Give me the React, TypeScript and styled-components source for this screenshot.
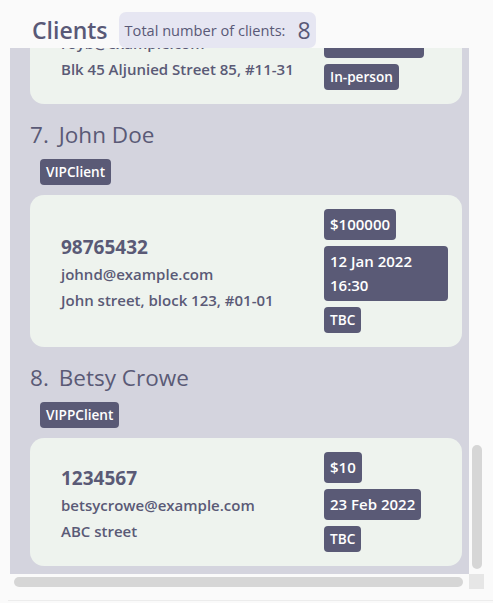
import React from "react";
import styled, { createGlobalStyle } from "styled-components";

const GlobalStyle = createGlobalStyle`
  html, body {
    margin: 0;
    padding: 0;
    background: #fafafa;
    font-family: "Open Sans", "Noto Sans", sans-serif;
  }
`;

const Page = styled.div`
  width: 493px;
  height: 603px;
  display: flex;
  flex-direction: column;
  overflow: hidden;
`;

const Header = styled.header`
  height: 48px;
  flex-shrink: 0;
  display: flex;
  align-items: flex-end;
  gap: 11px;
  padding-left: 32px;
  box-sizing: border-box;
`;

const Title = styled.h1`
  margin: 0;
  font-size: 23px;
  font-weight: 600;
  line-height: 36px;
  color: #595977;
`;

const CountBadge = styled.div`
  height: 36px;
  box-sizing: border-box;
  display: flex;
  align-items: center;
  gap: 12px;
  padding: 0 5px 0 6px;
  background: #e6e6f2;
  border-radius: 7px;
`;

const CountLabel = styled.span`
  font-size: 14.6px;
  font-weight: 500;
  color: #595977;
`;

const CountValue = styled.span`
  font-size: 23px;
  font-weight: 500;
  color: #595977;
  line-height: 1;
`;

const ScrollPane = styled.div`
  margin-left: 10px;
  width: 475px;
  display: grid;
  grid-template-columns: 459px 16px;
  grid-template-rows: 526px 16px;
`;

const Viewport = styled.div`
  background: #d4d4de;
  overflow: hidden;
  display: flex;
  flex-direction: column;
  justify-content: flex-end;
  padding: 0 7px 0 20px;
`;

const VTrack = styled.div`
  display: flex;
  flex-direction: column;
  justify-content: flex-end;
  padding: 0 3px 5px 3px;
`;

const VThumb = styled.div`
  width: 10px;
  height: 124px;
  border-radius: 5px;
  background: #d6d6d6;
`;

const HTrack = styled.div`
  padding: 3px 6px 0 4px;
`;

const HThumb = styled.div`
  height: 10px;
  border-radius: 5px;
  background: #d6d6d6;
`;

const Corner = styled.div`
  width: 15px;
  height: 15px;
  background: #e6e6e6;
`;

const Footer = styled.div`
  margin-top: 10px;
  margin-left: 8px;
  border-top: 1px solid #ececec;
`;

const ClientItem = styled.div`
  flex-shrink: 0;
  display: flex;
  flex-direction: column;
  padding: 8px 0;
`;

const NameRow = styled.div`
  display: flex;
  gap: 10px;
  font-size: 22.5px;
  font-weight: 400;
  line-height: 30px;
  color: #5a5a76;
  margin-bottom: 9px;
`;

const TagRow = styled.div`
  display: flex;
  gap: 6px;
  padding-left: 10px;
  margin-bottom: 10px;
`;

const Tag = styled.span<{ $size?: "sm" | "md" }>`
  display: inline-block;
  background: #5a5a76;
  color: #ffffff;
  border-radius: 4px;
  font-weight: 600;
  font-size: ${(p) => (p.$size === "md" ? "15px" : "13.6px")};
  line-height: ${(p) => (p.$size === "md" ? "24px" : "18px")};
  padding: ${(p) => (p.$size === "md" ? "3px 6px 3.5px" : "4px 6px")};
`;

const Card = styled.div`
  display: flex;
  align-items: center;
  justify-content: space-between;
  padding: 14px 14px 14px 31px;
  background: #eef3ee;
  border-radius: 14px;
`;

const Details = styled.div`
  display: flex;
  flex-direction: column;
  padding-top: 4px;
  color: #5a5a76;
`;

const Phone = styled.div`
  font-size: 19px;
  font-weight: 700;
  line-height: 28px;
`;

const InfoLine = styled.div`
  font-size: 15px;
  font-weight: 600;
  line-height: 26px;
`;

const Meta = styled.div`
  width: 124px;
  display: flex;
  flex-direction: column;
  align-items: flex-start;
  gap: 6.5px;
`;

type Client = {
  index: number;
  name: string;
  tags: string[];
  phone: string;
  email: string;
  address: string;
  price: string;
  date: string;
  status: string;
};

const clients: Client[] = [
  {
    index: 6,
    name: "Roy Balakrishnan",
    tags: ["colleagues"],
    phone: "92624417",
    email: "royb@example.com",
    address: "Blk 45 Aljunied Street 85, #11-31",
    price: "$500",
    date: "10 Mar 2022",
    status: "In-person",
  },
  {
    index: 7,
    name: "John Doe",
    tags: ["VIPClient"],
    phone: "98765432",
    email: "johnd@example.com",
    address: "John street, block 123, #01-01",
    price: "$100000",
    date: "12 Jan 2022 16:30",
    status: "TBC",
  },
  {
    index: 8,
    name: "Betsy Crowe",
    tags: ["VIPPClient"],
    phone: "1234567",
    email: "betsycrowe@example.com",
    address: "ABC street",
    price: "$10",
    date: "23 Feb 2022",
    status: "TBC",
  },
];

const ClientCard = ({ c }: { c: Client }) => (
  <ClientItem>
    <NameRow>
      <span>{c.index}.</span>
      <span>{c.name}</span>
    </NameRow>
    <TagRow>
      {c.tags.map((t) => (
        <Tag key={t}>{t}</Tag>
      ))}
    </TagRow>
    <Card>
      <Details>
        <Phone>{c.phone}</Phone>
        <InfoLine>{c.email}</InfoLine>
        <InfoLine>{c.address}</InfoLine>
      </Details>
      <Meta>
        <Tag $size="md">{c.price}</Tag>
        <Tag $size="md">{c.date}</Tag>
        <Tag>{c.status}</Tag>
      </Meta>
    </Card>
  </ClientItem>
);

export default function App() {
  return (
    <>
      <GlobalStyle />
      <Page>
        <Header>
          <Title>Clients</Title>
          <CountBadge>
            <CountLabel>Total number of clients:</CountLabel>
            <CountValue>8</CountValue>
          </CountBadge>
        </Header>
        <ScrollPane>
          <Viewport>
            {clients.map((c) => (
              <ClientCard key={c.index} c={c} />
            ))}
          </Viewport>
          <VTrack>
            <VThumb />
          </VTrack>
          <HTrack>
            <HThumb />
          </HTrack>
          <Corner />
        </ScrollPane>
        <Footer />
      </Page>
    </>
  );
}
